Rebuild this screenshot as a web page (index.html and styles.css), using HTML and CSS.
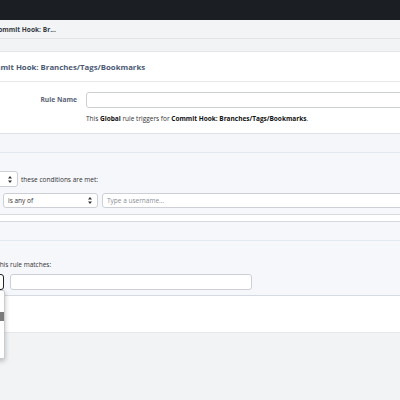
FILE: index.html
```html
<!DOCTYPE html>
<html>
<head>
<meta charset="utf-8">
<link rel="stylesheet" href="styles.css">
</head>
<body>
<div class="topbar"></div>
<div class="crumbs"><span class="crumb">Commit Hook: Br...</span></div>
<div class="subbar"></div>
<div class="panel">
  <div class="panel-title"><span class="title-text">Commit Hook: Branches/Tags/Bookmarks</span></div>
  <div class="name-row">
    <label class="label">Rule Name</label>
    <div class="field">
      <div class="input input-name"></div>
      <p class="help">This <b>Global</b> rule triggers for <b>Commit Hook: Branches/Tags/Bookmarks</b>.</p>
    </div>
  </div>
  <div class="band"></div>
  <div class="conditions">
    <div class="cond-line">
      <div class="select select-any"><span class="sel-text">All</span><svg class="arrows" viewBox="0 0 4 7" width="4" height="7"><path d="M2 0 L4 2.6 L0 2.6 Z M2 7 L4 4.4 L0 4.4 Z" fill="#333"/></svg></div>
      <span class="cond-text">these conditions are met:</span>
    </div>
    <div class="cond-row">
      <div class="select select-op"><span class="sel-text">is any of</span><svg class="arrows" viewBox="0 0 4 7" width="4" height="7"><path d="M2 0 L4 2.6 L0 2.6 Z M2 7 L4 4.4 L0 4.4 Z" fill="#333"/></svg></div>
      <div class="input input-user"><span class="placeholder">Type a username...</span></div>
    </div>
  </div>
  <div class="strip"></div>
  <div class="band2"></div>
  <div class="actions">
    <p class="act-text">When this rule matches:</p>
    <div class="act-row">
      <div class="select select-act"></div>
      <div class="input input-act"></div>
    </div>
    <div class="menu">
      <div class="menu-item"></div>
      <div class="menu-item active"></div>
      <div class="menu-item"></div>
      <div class="menu-item"></div>
      <div class="menu-item"></div>
      <div class="menu-item"></div>
    </div>
  </div>
  <div class="footer-area"></div>
</div>
</body>
</html>
```
FILE: styles.css
```css
* { box-sizing: border-box; margin: 0; padding: 0; }
html, body { width: 400px; height: 400px; overflow: hidden; }
body {
  font-family: "Open Sans", "Noto Sans", sans-serif;
  background: #f2f3f5;
  color: #333;
  font-size: 6.5px;
}
.topbar { height: 20px; background: #1b1f23; }
.crumbs {
  height: 19px;
  background: #f3f4f6;
  border-bottom: 1px solid #e1e3e7;
  display: flex;
  align-items: center;
  overflow: hidden;
}
.crumb { margin-left: -6px; font-weight: 700; color: #353b44; font-size: 6.6px; white-space: nowrap; }
.subbar { height: 13px; background: #f2f3f5; border-bottom: 1px solid #e3e5e9; }
.panel { background: #fff; }
.panel-title {
  height: 30px;
  border-bottom: 1px solid #e6e8eb;
  display: flex;
  align-items: center;
  overflow: hidden;
}
.title-text { margin-left: -17px; font-weight: 700; font-size: 7.8px; color: #4d5a75; white-space: nowrap; }
.name-row {
  height: 52px;
  border-bottom: 1px solid #dcdfe4;
  display: grid;
  grid-template-columns: 86px 1fr;
  padding-top: 10px;
}
.label {
  text-align: right;
  padding-right: 9px;
  font-weight: 700;
  font-size: 6.7px;
  color: #5a6478;
  line-height: 16px;
}
.field { overflow: hidden; }
.input {
  height: 16px;
  background: #fff;
  border: 1px solid #ccd0d6;
  border-radius: 3px;
}
.input-name { width: 330px; }
.help { margin-top: 7px; line-height: 8px; font-size: 6.5px; color: #333; white-space: nowrap; }
.help b { color: #111; }
.band { height: 19px; background: #f5f6fa; border-bottom: 1px solid #e1e8ef; }
.conditions {
  height: 62px;
  background: #f6f7fb;
  border-bottom: 1px solid #d8dce2;
  padding-top: 18px;
  overflow: hidden;
}
.cond-line { display: flex; align-items: center; gap: 3px; height: 16px; }
.select {
  height: 16px;
  background: #fff;
  border: 1px solid #ccd0d6;
  border-radius: 3px;
  display: flex;
  align-items: center;
  padding: 0 5px;
}
.select-any { width: 40px; margin-left: -22px; justify-content: space-between; }
.sel-text { font-size: 6.5px; color: #333; }
.arrows { display: block; }
.cond-text { font-size: 6.5px; color: #333; }
.cond-row { display: flex; gap: 4px; margin-top: 6px; padding-left: 3px; }
.cond-row .select, .cond-row .input { height: 15px; }
.select-op { width: 95px; flex: none; justify-content: space-between; padding: 0 5px 0 4px; }
.input-user { width: 310px; flex: none; display: flex; align-items: center; padding-left: 4px; }
.placeholder { color: #8a8f96; font-size: 6.5px; }
.strip { height: 7px; background: #fff; border-bottom: 1px solid #d5dae1; }
.band2 { height: 19px; background: #f6f7fb; border-bottom: 1px solid #e2eaf2; }
.actions {
  position: relative;
  height: 55px;
  background: #f6f7fb;
  border-bottom: 1px solid #d6dbe3;
  padding-top: 20px;
  overflow: visible;
}
.act-text { margin-left: -22px; line-height: 8px; font-size: 6.5px; color: #333; white-space: nowrap; }
.act-row { display: flex; gap: 6px; margin-top: 5px; }
.select-act { width: 30px; flex: none; margin-left: -26px; border-color: #222; }
.input-act { width: 242px; flex: none; }
.menu {
  position: absolute;
  left: -60px;
  top: 49px;
  width: 65px;
  height: 69px;
  background: #fff;
  border: 1px solid #c9ccd1;
  border-radius: 2px;
  box-shadow: 0 2px 5px rgba(0, 0, 0, 0.25);
  padding-top: 12px;
  z-index: 2;
}
.menu-item { height: 9px; }
.menu-item.active { background: #7b7b7b; }
.footer-area { height: 37px; background: #fff; border-bottom: 1px solid #e6e7ea; }
```
